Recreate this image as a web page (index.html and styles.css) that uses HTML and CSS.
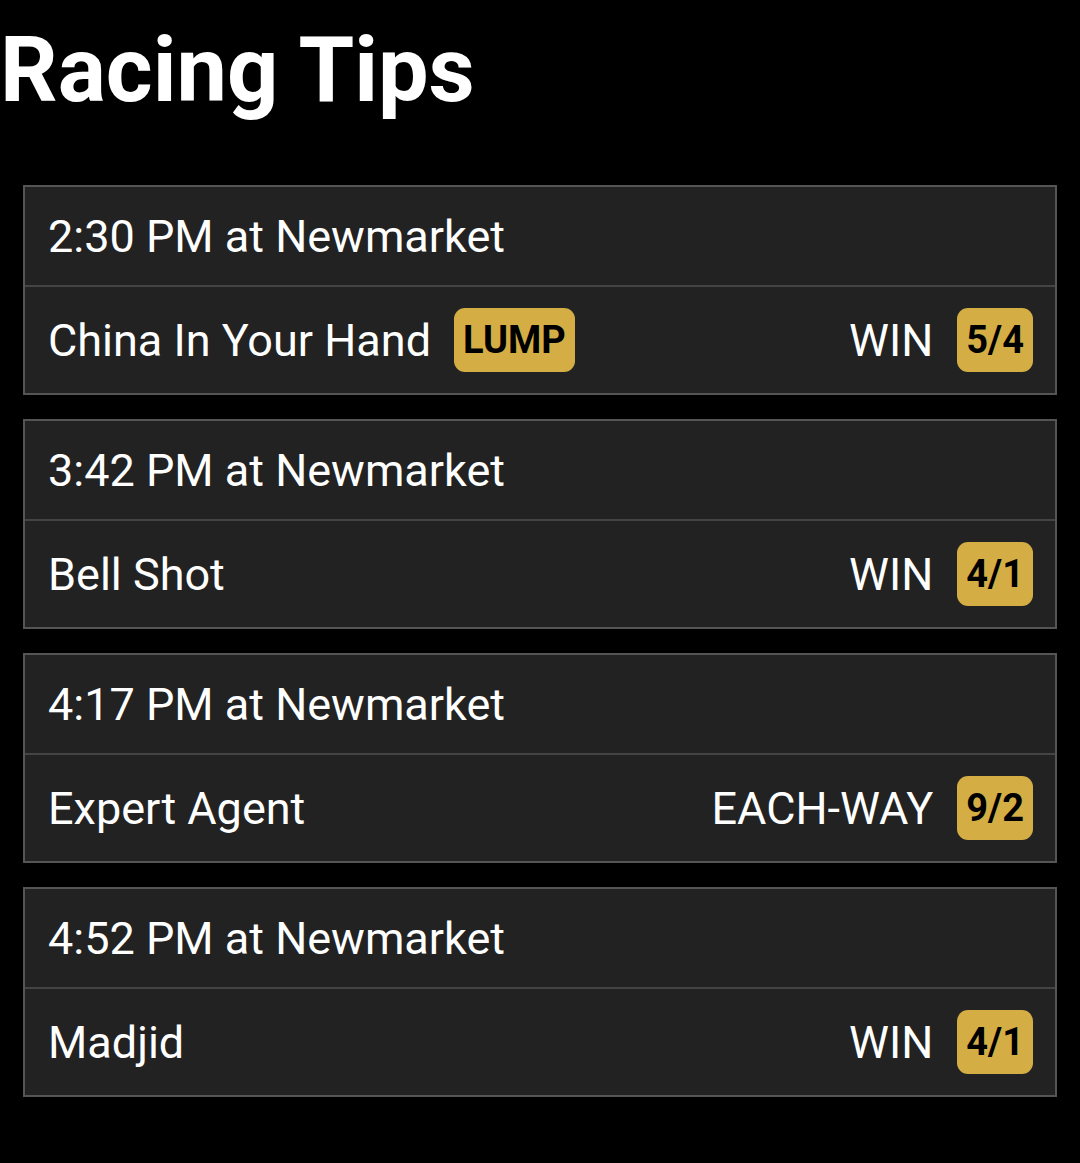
FILE: index.html
```html
<!DOCTYPE html>
<html lang="en">
<head>
  <meta charset="UTF-8">
  <meta name="viewport" content="width=device-width, initial-scale=1.0">
  <title>Racing Tips</title>
  <link rel="stylesheet" href="styles.css">
</head>
<body>
<h1 class="title">Racing Tips</h1>
<div class="tips">
  <div class="tip">
    <div class="race">2:30 PM at Newmarket</div>
    <div class="pick">
      <span class="horse">China In Your Hand</span>
      <span class="tag">LUMP</span>
      <span class="bet">WIN</span>
      <span class="odds">5/4</span>
    </div>
  </div>
  <div class="tip">
    <div class="race">3:42 PM at Newmarket</div>
    <div class="pick">
      <span class="horse">Bell Shot</span>
      <span class="bet">WIN</span>
      <span class="odds">4/1</span>
    </div>
  </div>
  <div class="tip">
    <div class="race">4:17 PM at Newmarket</div>
    <div class="pick">
      <span class="horse">Expert Agent</span>
      <span class="bet">EACH-WAY</span>
      <span class="odds">9/2</span>
    </div>
  </div>
  <div class="tip">
    <div class="race">4:52 PM at Newmarket</div>
    <div class="pick">
      <span class="horse">Madjid</span>
      <span class="bet">WIN</span>
      <span class="odds">4/1</span>
    </div>
  </div>
</div>
</body>
</html>
```

FILE: styles.css
```css
body {
  margin: 0;
  background: #000;
  color: #fff;
  font-family: Roboto, "Liberation Sans", sans-serif;
}
.title {
  margin: 0;
  padding: 21px 0 0 0;
  font-size: 90px;
  line-height: 100px;
  font-weight: 700;
}
.tips {
  display: flex;
  flex-direction: column;
  gap: 24px;
  margin: 64px 23px 0 23px;
}
.tip {
  background: #222;
  border: 2px solid #555;
}
.race {
  height: 98px;
  display: flex;
  align-items: center;
  padding: 0 23px;
  font-size: 45px;
  border-bottom: 2px solid #444;
}
.pick {
  height: 106px;
  display: flex;
  align-items: center;
  padding: 0 22px 0 23px;
  font-size: 45px;
}
.horse {
  margin-right: 23px;
}
.bet {
  margin-left: auto;
  margin-right: 24px;
}
.tag, .odds {
  background: #d4ae45;
  color: #000;
  font-weight: 700;
  font-size: 38px;
  height: 64px;
  line-height: 64px;
  padding: 0 9px;
  border-radius: 11px;
}
```
